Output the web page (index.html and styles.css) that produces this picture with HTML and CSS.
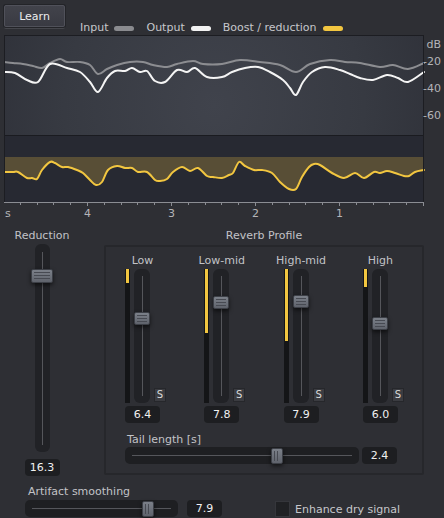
FILE: index.html
```html
<!DOCTYPE html>
<html>
<head>
<meta charset="utf-8">
<title>Reverb reduction</title>
<link rel="stylesheet" href="styles.css">
</head>
<body>
<div class="app">
  <div class="top">
    <button class="learn">Learn</button>
    <div class="legend">
      <span class="lg-text">Input</span><span class="pill pill-in"></span>
      <span class="lg-text">Output</span><span class="pill pill-out"></span>
      <span class="lg-text">Boost / reduction</span><span class="pill pill-boost"></span>
    </div>
  </div>

  <svg class="graph" width="440" height="193" viewBox="4 35 440 193">
    <defs>
      <radialGradient id="bg" gradientUnits="userSpaceOnUse" cx="214" cy="105" r="250">
        <stop offset="0" stop-color="#40434c"/>
        <stop offset="0.6" stop-color="#373a42"/>
        <stop offset="1" stop-color="#2e3038"/>
      </radialGradient>
    </defs>
    <rect x="4" y="35" width="420" height="100" fill="url(#bg)"/>
    <rect x="4" y="135" width="420" height="67" fill="#272932"/>
    <line x1="4" y1="135.5" x2="424" y2="135.5" stroke="#1a1b20" stroke-width="1"/>
    <path class="band-fill" data-fill="157" d="M4 157 L4 172 L424 170 L424 157 Z" data-pts="4,172 13,172 18,172 27,178 32,178 37,179 42,170 50,162 55,163 62,167 68,167 77,170 83,173 90,180 96,185 102,182 108,170 117,166 125,168 132,168 138,172 147,172 155,180 160,181 167,179 173,172 182,167 190,171 198,168 207,176 213,177 222,178 229,175 233,173 239,162 245,166 254,170 262,170 272,173 280,182 289,189 296,189 302,177 309,167 314,164 320,165 332,173 344,178 355,173 364,178 374,172 380,173 387,171 395,173 404,176 409,176 415,172 424,170"/>
    <path class="ln ln-boost" d="M4 172 L424 170" data-pts="4,172 13,172 18,172 27,178 32,178 37,179 42,170 50,162 55,163 62,167 68,167 77,170 83,173 90,180 96,185 102,182 108,170 117,166 125,168 132,168 138,172 147,172 155,180 160,181 167,179 173,172 182,167 190,171 198,168 207,176 213,177 222,178 229,175 233,173 239,162 245,166 254,170 262,170 272,173 280,182 289,189 296,189 302,177 309,167 314,164 320,165 332,173 344,178 355,173 364,178 374,172 380,173 387,171 395,173 404,176 409,176 415,172 424,170"/>
    <path class="ln ln-in" d="M4 62 L424 63" data-pts="4,62 13,63 23,64 33,66 42,68 50,63 60,59 67,62 80,62 90,65 98,74 107,69 117,65 130,62 143,62 153,65 167,67 177,64 193,61 203,64 222,64 240,60 260,62 280,65 296,72 310,64 330,60 345,62 360,63 380,67 393,65 408,69 424,63"/>
    <path class="ln ln-out" d="M4 72 L424 72" data-pts="4,72 15,73 27,80 38,82 50,64 67,68 80,72 90,82 98,92 107,78 115,71 125,71 132,68 140,72 147,71 155,81 165,82 177,70 187,72 195,68 207,77 222,77 232,72 245,68 258,67 270,72 283,80 290,88 296,95 303,82 312,72 325,67 340,70 350,74 360,78 373,80 387,75 398,78 408,82 424,72"/>
    <path d="M4.5 35 V202 M4 35.5 H424 M423.5 35 V202" stroke="#1c1d22" stroke-width="1" fill="none"/>
    <path d="M4 202.5 H424" stroke="#8b8d93" stroke-width="1"/>
    <path class="ticks" d="M20.5 202 v3 M37.5 202 v3 M53.5 202 v3 M70.5 202 v3 M87.5 202 v4 M104.5 202 v3 M121.5 202 v3 M137.5 202 v3 M154.5 202 v3 M171.5 202 v4 M188.5 202 v3 M205.5 202 v3 M221.5 202 v3 M238.5 202 v3 M255.5 202 v4 M272.5 202 v3 M289.5 202 v3 M305.5 202 v3 M322.5 202 v3 M339.5 202 v4 M356.5 202 v3 M373.5 202 v3 M389.5 202 v3 M406.5 202 v3 M423.5 202 v4"/>
    <path d="M424 34.5 H428" stroke="#8b8d93" stroke-width="1"/>
    <text class="ax" x="5" y="217">s</text>
    <text class="ax mid" x="87.5" y="217">4</text>
    <text class="ax mid" x="171.5" y="217">3</text>
    <text class="ax mid" x="255.5" y="217">2</text>
    <text class="ax mid" x="339.5" y="217">1</text>
    <text class="ax end" x="441" y="48">dB</text>
    <text class="ax end" x="441" y="65">-20</text>
    <text class="ax end" x="441" y="92">-40</text>
    <text class="ax end" x="441" y="119">-60</text>
  </svg>

  <div class="controls">
    <div class="reduction">
      <div class="ctl-title">Reduction</div>
      <div class="vtrack vtrack-big">
        <span class="vline"></span>
        <span class="thumb thumb-big" style="top:25px"></span>
      </div>
      <div class="value value-red">16.3</div>
    </div>

    <div class="reverb">
      <div class="ctl-title ctl-title-rev">Reverb Profile</div>
      <div class="panel">
        <div class="bands">
          <div class="band">
            <div class="band-label">Low</div>
            <div class="band-body">
              <div class="meter"><span class="meter-fill" style="height:14px"></span></div>
              <div class="vtrack"><span class="vline"></span><span class="thumb" style="top:43px"></span></div>
              <span class="solo">S</span>
            </div>
            <div class="value">6.4</div>
          </div>
          <div class="band">
            <div class="band-label">Low-mid</div>
            <div class="band-body">
              <div class="meter"><span class="meter-fill" style="height:64px"></span></div>
              <div class="vtrack"><span class="vline"></span><span class="thumb" style="top:27px"></span></div>
              <span class="solo">S</span>
            </div>
            <div class="value">7.8</div>
          </div>
          <div class="band">
            <div class="band-label">High-mid</div>
            <div class="band-body">
              <div class="meter"><span class="meter-fill" style="height:72px"></span></div>
              <div class="vtrack"><span class="vline"></span><span class="thumb" style="top:26px"></span></div>
              <span class="solo">S</span>
            </div>
            <div class="value">7.9</div>
          </div>
          <div class="band">
            <div class="band-label">High</div>
            <div class="band-body">
              <div class="meter"><span class="meter-fill" style="height:18px"></span></div>
              <div class="vtrack"><span class="vline"></span><span class="thumb" style="top:48px"></span></div>
              <span class="solo">S</span>
            </div>
            <div class="value">6.0</div>
          </div>
        </div>
        <div class="tail">
          <div class="h-label">Tail length [s]</div>
          <div class="hrow">
            <div class="htrack htrack-tail"><span class="hline"></span><span class="hthumb" style="left:146px"></span></div>
            <div class="value">2.4</div>
          </div>
        </div>
      </div>
    </div>
  </div>

  <div class="bottom">
    <div class="artifact">
      <div class="h-label">Artifact smoothing</div>
      <div class="hrow hrow-art">
        <div class="htrack htrack-art"><span class="hline"></span><span class="hthumb" style="left:117px"></span></div>
        <div class="value">7.9</div>
      </div>
    </div>
    <label class="check">
      <span class="box"></span>
      <span class="check-text">Enhance dry signal</span>
    </label>
  </div>
</div>
<script src="script.js"></script>
</body>
</html>
```

FILE: styles.css
```css
* { box-sizing: border-box; }
html, body { margin: 0; padding: 0; }
body {
  background: #2e2f34;
  font-family: "DejaVu Sans", Verdana, sans-serif;
  font-size: 11px;
  color: #c2c3c7;
  width: 444px;
  height: 518px;
  overflow: hidden;
}
.app { width: 444px; height: 518px; }

/* top bar */
.top {
  display: flex;
  align-items: flex-start;
  height: 35px;
  padding: 5px 0 0 4px;
}
.learn {
  width: 61px;
  height: 22px;
  margin: 0;
  padding: 0;
  background: linear-gradient(#42434b, #393a42);
  border: 1px solid #50515a;
  border-radius: 2px;
  color: #ededed;
  font: 11px "DejaVu Sans", Verdana, sans-serif;
  box-shadow: 0 0 0 1px #232428, 0 2px 0 #45464c;
}
.legend {
  display: flex;
  align-items: center;
  margin: 16px 0 0 15px;
  height: 14px;
  line-height: 14px;
  color: #c6c7cb;
}
.pill {
  display: block;
  width: 20px;
  height: 5px;
  border-radius: 3px;
  margin: 1px 12px 0 6px;
}
.pill-in { background: #8a8b8f; }
.pill-out { background: #f2f2f2; }
.pill-boost { background: #f2c640; }

/* graph */
.graph { display: block; margin-left: 4px; }
.band-fill { fill: #584e36; }
.ln { fill: none; stroke-width: 2; stroke-linejoin: round; stroke-linecap: round; }
.ln-boost { stroke: #f2c640; }
.ln-in { stroke: #8c8d91; }
.ln-out { stroke: #f4f4f4; }
.ticks { stroke: #8b8d93; stroke-width: 1; }
.ax { font-family: "DejaVu Sans", Verdana, sans-serif; font-size: 11px; fill: #b4b5b9; }
.ax.mid { text-anchor: middle; }
.ax.end { text-anchor: end; }

/* controls */
.controls {
  display: flex;
  align-items: flex-start;
  height: 248px;
}
.reduction {
  width: 76px;
  margin-left: 4px;
  display: flex;
  flex-direction: column;
  align-items: center;
}
.ctl-title {
  height: 16px;
  line-height: 16px;
  text-align: center;
  white-space: nowrap;
}
.ctl-title-rev { height: 17px; }

.vtrack {
  position: relative;
  width: 16px;
  height: 134px;
  background: #212226;
  border-radius: 6px;
}
.vtrack-big { width: 15px; height: 208px; }
.vline {
  position: absolute;
  left: 50%;
  top: 7px;
  bottom: 7px;
  width: 1px;
  background: #55565b;
}
.vtrack-big .vline { top: 8px; }

.thumb {
  position: absolute;
  left: 50%;
  width: 16px;
  height: 13px;
  margin-left: -8px;
  border-radius: 2px;
  background: linear-gradient(#7b8089, #5f636c);
  border: 1px solid #3c3f46;
  box-shadow: 0 2px 4px rgba(0,0,0,0.6);
}
.thumb::after {
  content: "";
  position: absolute;
  left: 2px;
  right: 2px;
  top: 2px;
  bottom: 2px;
  background: repeating-linear-gradient(to bottom, #474a52 0 1px, transparent 1px 3px);
}
.thumb-big {
  width: 22px;
  height: 14px;
  margin-left: -11px;
}

.value {
  width: 35px;
  height: 17px;
  line-height: 17px;
  background: #1d1e21;
  border-radius: 4px;
  text-align: center;
  color: #f0f0f0;
  flex: none;
}
.value-red { margin-top: 7px; }

/* reverb profile */
.reverb {
  margin-left: 24px;
  width: 320px;
}
.panel {
  height: 230px;
  border: 2px solid #26272b;
  border-radius: 2px;
  padding: 6px 0 0 19px;
}
.bands { display: flex; }
.band {
  width: 79.3px;
  flex: none;
  display: flex;
  flex-direction: column;
}
.band-label {
  width: 35px;
  height: 16px;
  line-height: 16px;
  white-space: nowrap;
  display: flex;
  justify-content: center;
}
.band-body {
  display: flex;
  height: 134px;
}
.meter {
  position: relative;
  width: 5px;
  height: 134px;
  margin-right: 4px;
  background: #141517;
}
.meter-fill {
  position: absolute;
  top: 0;
  left: 1px;
  right: 1px;
  background: #f2c640;
}
.solo {
  align-self: flex-end;
  width: 12px;
  height: 14px;
  margin: 0 0 1px 4px;
  background: #3b3c41;
  border: 1px solid #26272b;
  color: #dadada;
  font-size: 10px;
  line-height: 12px;
  text-align: center;
}
.band .value { margin-top: 3px; }

.tail { margin-top: 10px; }
.h-label {
  height: 14px;
  line-height: 14px;
  padding-left: 2px;
  white-space: nowrap;
}
.hrow { display: flex; gap: 3px; }
.htrack {
  position: relative;
  height: 17px;
  background: #1e1f22;
  border-radius: 5px;
  flex: none;
}
.htrack-tail { width: 234px; }
.htrack-art { width: 153px; }
.hline {
  position: absolute;
  left: 7px;
  right: 7px;
  top: 8px;
  height: 1px;
  background: #55565b;
}
.hthumb {
  position: absolute;
  top: 1px;
  width: 12px;
  height: 16px;
  border-radius: 2px;
  background: linear-gradient(#7b8089, #5f636c);
  border: 1px solid #3c3f46;
  box-shadow: 0 2px 4px rgba(0,0,0,0.6);
}
.hthumb::after {
  content: "";
  position: absolute;
  left: 2px;
  right: 2px;
  top: 2px;
  bottom: 2px;
  background: repeating-linear-gradient(to right, #474a52 0 1px, transparent 1px 3px);
}

/* bottom row */
.bottom {
  display: flex;
  align-items: flex-end;
  margin-top: 9px;
  padding-left: 25px;
}
.artifact .h-label { padding-left: 3px; margin-bottom: 1px; }
.hrow-art { gap: 9px; }
.check {
  display: flex;
  align-items: center;
  margin-left: 53px;
  color: #c6c7cb;
}
.box {
  display: block;
  width: 15px;
  height: 16px;
  background: #202124;
  border: 1px solid #35363b;
}
.check-text { margin-left: 5px; white-space: nowrap; }
```

FILE: script.js
```js
function smoothPath(pts) {
  var d = "M" + pts[0][0] + " " + pts[0][1];
  for (var i = 0; i < pts.length - 1; i++) {
    var p0 = pts[i - 1] || pts[i];
    var p1 = pts[i];
    var p2 = pts[i + 1];
    var p3 = pts[i + 2] || p2;
    var c1x = p1[0] + (p2[0] - p0[0]) / 6;
    var c1y = p1[1] + (p2[1] - p0[1]) / 6;
    var c2x = p2[0] - (p3[0] - p1[0]) / 6;
    var c2y = p2[1] - (p3[1] - p1[1]) / 6;
    d += " C" + c1x.toFixed(2) + " " + c1y.toFixed(2) + " " + c2x.toFixed(2) + " " + c2y.toFixed(2) + " " + p2[0] + " " + p2[1];
  }
  return d;
}

document.querySelectorAll("[data-pts]").forEach(function (el) {
  var pts = el.getAttribute("data-pts").trim().split(/\s+/).map(function (s) {
    return s.split(",").map(Number);
  });
  var curve = smoothPath(pts);
  if (el.hasAttribute("data-fill")) {
    var top = Number(el.getAttribute("data-fill"));
    var first = pts[0];
    var last = pts[pts.length - 1];
    curve = "M" + first[0] + " " + top + " L" + first[0] + " " + first[1] +
      curve.replace(/^M[^C]*/, " ") + " L" + last[0] + " " + top + " Z";
  }
  el.setAttribute("d", curve);
});
```
